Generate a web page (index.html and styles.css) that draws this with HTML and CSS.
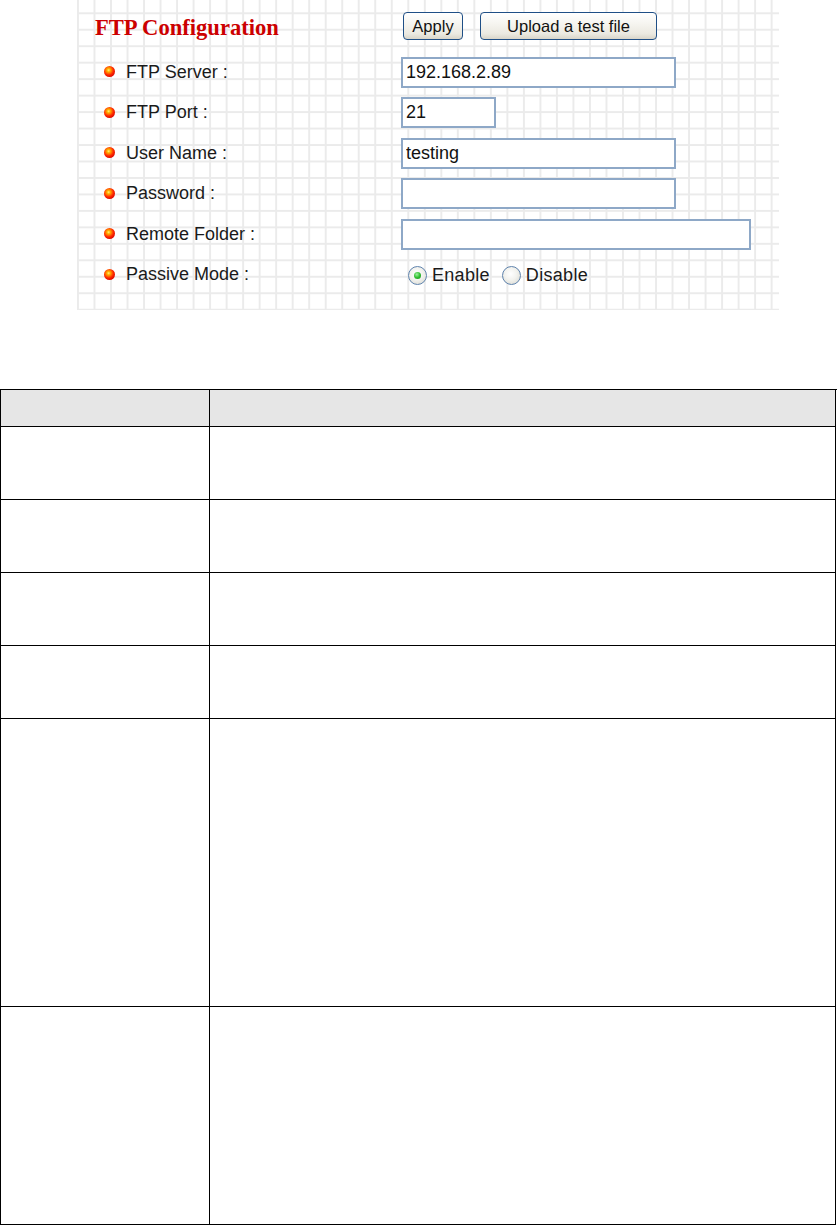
FILE: index.html
```html
<!DOCTYPE html>
<html>
<head>
<meta charset="utf-8">
<title>FTP Configuration</title>
<link rel="stylesheet" href="styles.css">
</head>
<body>
<div class="panel">
  <div class="head">
    <h1 class="title">FTP Configuration</h1>
    <div class="actions">
      <button class="btn btn-apply">Apply</button>
      <button class="btn btn-upload">Upload a test file</button>
    </div>
  </div>
  <div class="row">
    <div class="label"><span class="dot"></span>FTP Server :</div>
    <div class="field"><input class="inp w-md" type="text" value="192.168.2.89"></div>
  </div>
  <div class="row">
    <div class="label"><span class="dot"></span>FTP Port :</div>
    <div class="field"><input class="inp w-sm" type="text" value="21"></div>
  </div>
  <div class="row">
    <div class="label"><span class="dot"></span>User Name :</div>
    <div class="field"><input class="inp w-md" type="text" value="testing"></div>
  </div>
  <div class="row">
    <div class="label"><span class="dot"></span>Password :</div>
    <div class="field"><input class="inp w-md" type="password" value=""></div>
  </div>
  <div class="row">
    <div class="label"><span class="dot"></span>Remote Folder :</div>
    <div class="field"><input class="inp w-lg" type="text" value=""></div>
  </div>
  <div class="row">
    <div class="label"><span class="dot"></span>Passive Mode :</div>
    <div class="field radios">
      <span class="radio on"></span><span class="rlabel">Enable</span>
      <span class="radio"></span><span class="rlabel">Disable</span>
    </div>
  </div>
</div>

<div class="table">
  <div class="cell hd"></div><div class="cell hd"></div>
  <div class="cell r73"></div><div class="cell r73"></div>
  <div class="cell r73"></div><div class="cell r73"></div>
  <div class="cell r73"></div><div class="cell r73"></div>
  <div class="cell r73"></div><div class="cell r73"></div>
  <div class="cell r288"></div><div class="cell r288"></div>
  <div class="cell r218"></div><div class="cell r218"></div>
</div>
</body>
</html>
```

FILE: styles.css
```css
html, body {
  margin: 0;
  padding: 0;
  background: #ffffff;
}

body {
  font-family: "Liberation Sans", Arial, sans-serif;
  color: #111;
}

.panel {
  margin-left: 77px;
  width: 702px;
  height: 310px;
  box-sizing: border-box;
  background-color: #ffffff;
  background-image:
    linear-gradient(to right, #ebebeb 0, #ebebeb 2px, transparent 2px),
    linear-gradient(to bottom, #ebebeb 0, #ebebeb 2px, transparent 2px);
  background-size: 16.52px 16.48px, 16.52px 16.48px;
  background-position: 0 0, 0 12.3px;
  display: flex;
  flex-direction: column;
}

.head {
  height: 52px;
  display: flex;
  align-items: center;
}

.title {
  margin: 0;
  width: 324px;
  box-sizing: border-box;
  padding-left: 18px;
  padding-top: 4px;
  font-family: "Liberation Serif", "Times New Roman", serif;
  font-weight: bold;
  font-size: 22.6px;
  color: #cc0000;
  line-height: 1;
}

.actions {
  display: flex;
  align-items: center;
  gap: 17px;
  padding-left: 2px;
}

.btn {
  height: 28px;
  box-sizing: border-box;
  border: 1.5px solid #1f4f86;
  border-radius: 4px;
  background: linear-gradient(to bottom, #ffffff 0%, #f6f5f0 40%, #ebe9e1 80%, #d9d5c9 100%);
  font-family: "Liberation Sans", Arial, sans-serif;
  font-size: 16.5px;
  color: #111;
  padding: 0;
  line-height: 1;
}

.btn-apply { width: 60px; }
.btn-upload { width: 177px; }

.row {
  height: 40.5px;
  display: flex;
  align-items: center;
}

.label {
  width: 324px;
  box-sizing: border-box;
  padding-left: 27px;
  display: flex;
  align-items: center;
  gap: 11px;
  font-size: 18px;
  color: #1a1a1a;
}

.dot {
  width: 11px;
  height: 11px;
  border-radius: 50%;
  background: radial-gradient(circle at 42% 38%, #fff27a 0, #ffb000 18%, #ff2a00 50%, #d40000 80%, #a80000 100%);
  flex: none;
  margin-top: -1px;
}

.field {
  display: flex;
  align-items: center;
}

.inp {
  height: 31px;
  box-sizing: border-box;
  border: 2px solid #8ea8c7;
  background: #ffffff;
  font-family: "Liberation Sans", Arial, sans-serif;
  font-size: 18px;
  color: #111;
  padding: 0 0 0 3px;
  margin: 0;
  outline: none;
}

.w-sm { width: 95px; }
.w-md { width: 275px; }
.w-lg { width: 350px; }

.radios {
  padding-left: 7px;
  padding-top: 2px;
}

.radio {
  width: 19px;
  height: 19px;
  box-sizing: border-box;
  border-radius: 50%;
  border: 1.5px solid #5f83ad;
  background: radial-gradient(circle at 45% 40%, #ffffff 0, #f2f2ee 45%, #d4d4cc 100%);
  display: flex;
  align-items: center;
  justify-content: center;
  flex: none;
}

.radio.on::after {
  content: "";
  width: 7px;
  height: 7px;
  border-radius: 50%;
  background: radial-gradient(circle at 40% 35%, #9ff09f 0, #30c030 50%, #1a8a1a 100%);
}

.rlabel {
  font-size: 18px;
  color: #1a1a1a;
  margin-left: 5px;
  margin-right: 12px;
  letter-spacing: 0.3px;
}

.table {
  margin-top: 79px;
  width: 836px;
  display: grid;
  grid-template-columns: 209px 626px;
  border-top: 1px solid #000;
  border-left: 1px solid #000;
}

.cell {
  box-sizing: border-box;
  border-right: 1px solid #000;
  border-bottom: 1px solid #000;
  background: #ffffff;
}

.cell.hd {
  height: 37px;
  background: #e6e6e6;
}

.r73 { height: 73px; }
.r288 { height: 288px; }
.r218 { height: 218px; }
```
